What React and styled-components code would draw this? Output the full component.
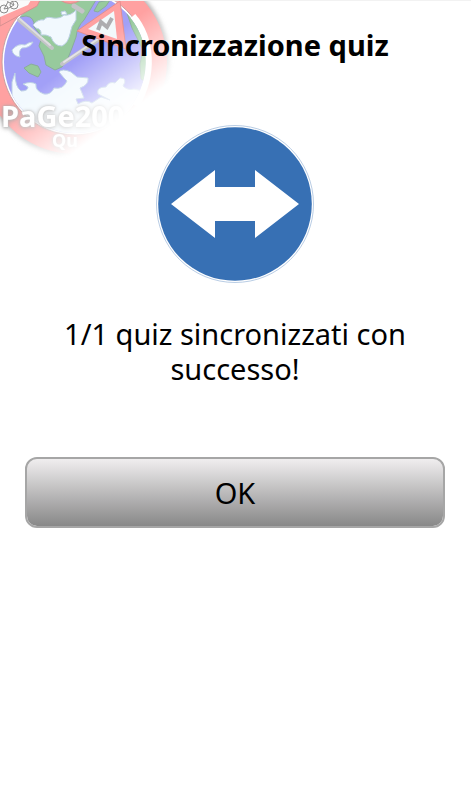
import styled, { createGlobalStyle } from 'styled-components'


const GlobalStyle = createGlobalStyle`
  body {
    margin: 0;
    background: #fff;
    color: #000;
    font-family: "Noto Sans", "Open Sans", sans-serif;
  }
`;

const Page = styled.main`
  position: relative;
  display: flex;
  flex-direction: column;
  align-items: center;
  min-height: 100vh;
  box-sizing: border-box;
  padding: 24px 26px 24px 25px;
  border-top: 1px solid #f2f2f2;
`;

/* faded logo, lies behind the title */
const Logo = styled.svg`
  position: absolute;
  top: -1px;
  left: 0;
  z-index: -1;
`;

const LogoText = styled.text`
  font-family: "Noto Sans", "Open Sans", sans-serif;
  font-weight: bold;
  font-size: ${props => props.$size}px;
  fill: #fff;
  filter: drop-shadow(0 0 1px #b4b4b4) drop-shadow(0 1px 2px #a4a4a4);
`;

const Title = styled.h1`
  margin: 0;
  font-size: 29px;
  line-height: 40px;
  font-weight: bold;
  text-align: center;
`;

const Sign = styled.svg`
  margin-top: 60px;
`;

const Message = styled.p`
  margin: 33px 0 0;
  font-size: 29px;
  line-height: 35px;
  text-align: center;
`;

const Button = styled.button`
  align-self: stretch;
  height: 71px;
  margin-top: 71px;
  padding: 0;
  border: 2px solid #a6a6a6;
  border-radius: 12px;
  background: linear-gradient(#f0eeef, #888) padding-box;
  color: #000;
  font-family: inherit;
  font-size: 29px;
`;

const GlobeLogo = () => (
  <Logo width="180" height="165" viewBox="0 0 180 165" aria-hidden="true">
    <defs>
      <linearGradient id="fade" gradientUnits="userSpaceOnUse" x1="54" y1="77" x2="97" y2="136">
        <stop offset="0" stopColor="#fff" />
        <stop offset="1" stopColor="#000" />
      </linearGradient>
      <mask id="fadeMask" maskUnits="userSpaceOnUse" x="0" y="0" width="180" height="165">
        <rect width="180" height="165" fill="url(#fade)" />
      </mask>
      <clipPath id="globe">
        <circle cx="75" cy="62" r="71" />
      </clipPath>
      <filter id="soft" x="-20%" y="-20%" width="140%" height="140%">
        <feGaussianBlur stdDeviation="2" />
      </filter>
    </defs>
    <g mask="url(#fadeMask)">
      <circle cx="76" cy="63" r="94" fill="#b4b4b4" filter="url(#soft)" />
      <circle cx="75" cy="62" r="92" fill="#ffa1a1" />
      <circle cx="75" cy="62" r="73" fill="#fff" stroke="#c9a0a0" strokeWidth="1" />
      <g clipPath="url(#globe)">
        <rect width="180" height="165" fill="#a2a0f7" />
        <g fill="#97ca9d" stroke="#8aad9a" strokeWidth="1" strokeLinejoin="round">
          <path d="M14 18L40 0H96L90 10L84 20Q77 27 76 37L72 48L68 58L62 67L55 70L46 65L44 56L39 46L42 37L34 27Q35 17 26 16Z" />
          <path d="M24 68L31 64L38 66L41 72L38 77L29 73Z" />
          <path d="M99 2L110 0L106 6L98 12L94 11Z" />
          <path d="M122 0L150 14V84L141 79L140 64L143 50L137 38L132 28L128 16Z" />
        </g>
        <g fill="#f2f9fe" stroke="#bcd0e4" strokeWidth="1" strokeLinejoin="round">
          <path d="M33 25Q38 19 44 20Q46 16 53 18Q60 19 64 15Q71 16 76 10L76 20Q71 26 70 34Q68 43 62 46Q54 46 51 37Q46 34 41 35Q42 29 36 28Z" />
          <path d="M61 12L65 11L67 14L62 15Z" />
          <path d="M12 50Q18 43 25 45Q29 42 33 42Q30 48 22 48Q18 51 20 57Q13 56 12 50Z" />
          <path d="M12 82L15 73Q15 87 21 91Q28 91 28 87L23 84Q31 81 36 84Q35 91 44 94Q51 95 54 88Q63 90 67 81L64 78L59 72Q62 68 71 72L77 77L88 78Q89 85 80 88L84 98L76 99L78 104Q86 99 92 103L101 97L110 100L98 94Q96 87 106 87Q109 81 115 83L120 78Q128 78 123 86Q128 91 134 89L142 91L140 110L110 135H50L20 112L12 96Z" />
        </g>
      </g>
      <path d="M133 16C152 38 155 75 136 106" fill="none" stroke="#fff" strokeWidth="6" />
      <g stroke="#c4c4c8" strokeLinecap="round">
        <path d="M19 20L52 48" strokeWidth="4" />
        <path d="M20 19L50 45" strokeWidth="2" stroke="#dedee0" />
        <path d="M62 64L98 40" strokeWidth="4" />
        <path d="M64 62L98 39" strokeWidth="2" stroke="#e4e4e6" />
        <path d="M74 6L82 11" strokeWidth="5" />
      </g>
      <path d="M60 0Q70 7 81 0Z" fill="#ff9e9e" stroke="#d69090" strokeWidth="1" />
      <path d="M0 26V0H40L37 6Z" fill="#ffa1a1" stroke="#d69090" strokeWidth="1" />
      <path d="M0 17V0H31L28 5Z" fill="#fafafa" />
      <g fill="none" stroke="#8c8c8c" strokeWidth="1">
        <circle cx="4" cy="9" r="4" />
        <circle cx="14" cy="5" r="4" />
        <path d="M4 9L8 2L14 5L9 8ZM8 2L7 0M14 5L12 0" />
      </g>
      <path d="M120 1L77 31L126 49Z" fill="#ffa1a1" stroke="#e48e8e" strokeWidth="1" strokeLinejoin="round" />
      <path d="M114 11L88 29L117 39Z" fill="#f2f9fb" />
      <path d="M98 30L101 22L107 27L112 18" fill="none" stroke="#adadb0" strokeWidth="4" />
      <LogoText x="1" y="127" $size={29}>PaGe200</LogoText>
      <LogoText x="52" y="147" $size={18}>Qu</LogoText>
    </g>
  </Logo>
)

const ArrowSign = () => (
  <Sign width="158" height="158" viewBox="0 0 158 158" role="img" aria-label="Sincronizzazione">
    <circle cx="79" cy="79" r="78.5" fill="#fff" stroke="#9ab6d8" strokeWidth="0.7" />
    <circle cx="79" cy="79" r="76.8" fill="#3770b4" />
    <path d="M15 79L59 45V62H99V45L143 79L99 113V96H59V113Z" fill="#fff" />
  </Sign>
)

const App = () => {
  return (
    <Page>
      <GlobalStyle />
      <GlobeLogo />
      <Title>Sincronizzazione quiz</Title>
      <ArrowSign />
      <Message>1/1 quiz sincronizzati con successo!</Message>
      <Button type="button">OK</Button>
    </Page>
  )
}

export default App;
